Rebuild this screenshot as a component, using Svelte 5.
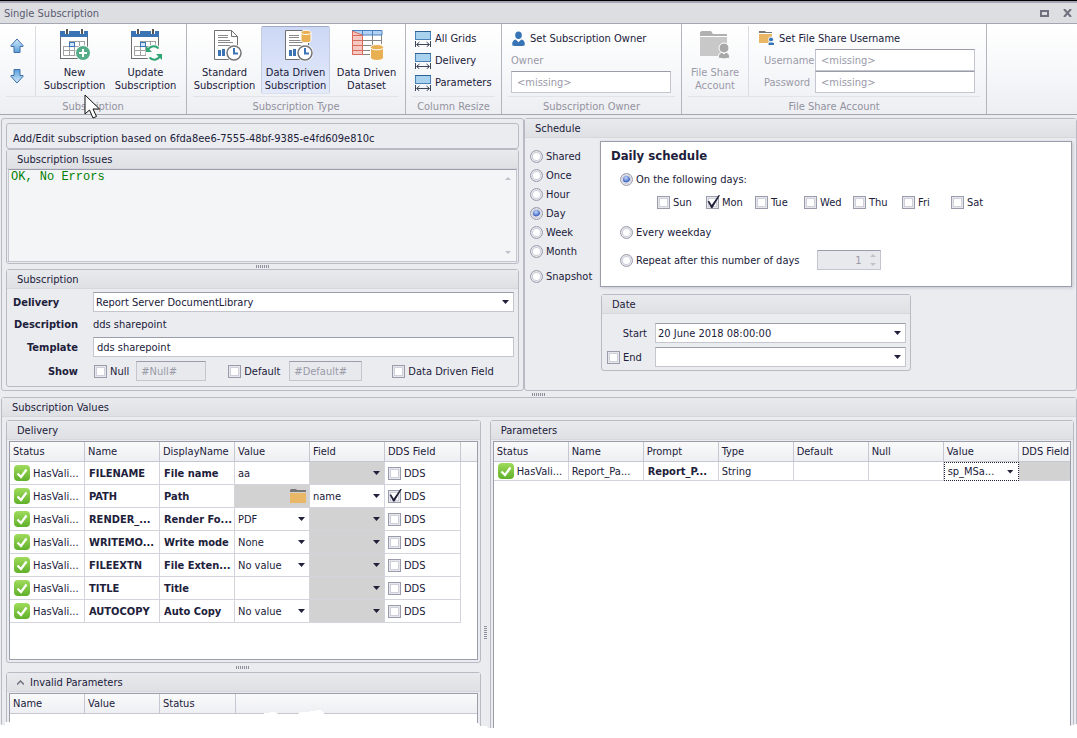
<script>
  const days = ["Sun", "Mon", "Tue", "Wed", "Thu", "Fri", "Sat"];
  const frequencies = ["Shared", "Once", "Hour", "Day", "Week", "Month", "Snapshot"];
  const resizers = ["All Grids", "Delivery", "Parameters"];

  let frequency = $state("Day");
  let selectedDays = $state(["Mon"]);
  let dailyMode = $state("days");

  let delivery = $state([
    { name: "FILENAME", display: "File name", value: "aa", kind: "text", field: "", dds: false },
    { name: "PATH", display: "Path", value: "", kind: "folder", field: "name", dds: true },
    { name: "RENDER_...", display: "Render Fo...", value: "PDF", kind: "list", field: "", dds: false },
    { name: "WRITEMO...", display: "Write mode", value: "None", kind: "list", field: "", dds: false },
    { name: "FILEEXTN", display: "File Exten...", value: "No value", kind: "list", field: "", dds: false },
    { name: "TITLE", display: "Title", value: "", kind: "text", field: "", dds: false },
    { name: "AUTOCOPY", display: "Auto Copy", value: "No value", kind: "list", field: "", dds: false },
  ]);
</script>

{#snippet arrow(flip)}
  <svg width="14" height="16" viewBox="0 0 14 16" class:flip>
    <defs>
      <linearGradient id="arrowFill" x1="0" y1="0" x2="0" y2="1">
        <stop offset="0" stop-color="#d3ecfb" />
        <stop offset="1" stop-color="#5b9fdc" />
      </linearGradient>
    </defs>
    <path d="M7 1 L13 7.5 V8.5 H10 V14.5 H4 V8.5 H1 V7.5 Z" fill="url(#arrowFill)" stroke="#3f6ea8" />
  </svg>
{/snippet}

{#snippet calendar(kind)}
  <svg width="34" height="34" viewBox="0 0 34 34">
    <rect x="2.500" y="4.500" width="27" height="26" fill="#fff" stroke="#6e6e6e" />
    <rect x="2" y="3" width="28" height="6" fill="#3a74b4" />
    <path d="M9 1v5M24 1v5" stroke="#fff" stroke-width="4" />
    <path d="M9 1v5M24 1v5" stroke="#555" stroke-width="2" />
    <rect x="11" y="14" width="6" height="5" fill="#cfe5fa" />
    <path d="M11.500 13.500h15M5.500 18.500h21M5.500 22.500h21M5.500 27.500h15M5.500 18v9.500M11.500 13v14.500M16.500 13v14.500M21.500 13v14.500M26.500 13v10" fill="none" stroke="#a2a2a2" />
    <rect x="11.500" y="14.500" width="5" height="4" fill="none" stroke="#3a74b4" />
    {#if kind === "new"}
      <circle cx="25" cy="25" r="7.500" fill="#55ac88" stroke="#fff" />
      <path d="M25 21v8M21 25h8" stroke="#fff" stroke-width="2" />
    {:else}
      <circle cx="25" cy="25" r="8.500" fill="#fbfbfc" />
      <path d="M18.500 23a6.500 6.500 0 0 1 11-2.500M31.500 27a6.500 6.500 0 0 1-11 2.500" fill="none" stroke="#2fa574" stroke-width="2" />
      <path d="M17 18v6h6ZM33 32v-6h-6Z" fill="#2fa574" />
    {/if}
  </svg>
{/snippet}

{#snippet report(driven)}
  <svg width="34" height="34" viewBox="0 0 34 34">
    <path d="M6.500 2.500H23.500L29.500 8.500V31.500H6.500Z" fill="#fff" stroke="#707070" />
    <path d="M23.500 2.500V8.500H29.500" fill="none" stroke="#707070" />
    <path d="M10 7.500h10M10 9.500h10M10 12.500h12M10 14.500h15M10 17.500h15" stroke="#8a8a8a" />
    <path d="M11.500 22v6M15.500 21v7" stroke="#3a74b4" stroke-width="3" />
    {#if driven}
      <path d="M22 4.500c0-3 10-3 10 0v8c0 3-10 3-10 0Z" fill="#e9b053" stroke="#fff" />
      <path d="M22 5c1 2 9 2 10 0" fill="none" stroke="#fff" />
    {/if}
    <circle cx="26" cy="25" r="8.500" fill="#fff" />
    <circle cx="26" cy="25" r="7" fill="#fff" stroke="#747474" stroke-width="1.500" />
    <path d="M26 20v5.500h4" fill="none" stroke="#3a74b4" stroke-width="2" />
  </svg>
{/snippet}

{#snippet dataset()}
  <svg width="34" height="34" viewBox="0 0 34 34">
    <rect x="2" y="2" width="30" height="25" fill="#fff" />
    <rect x="2" y="2" width="30" height="5" fill="#b3d1f2" />
    <path d="M2 3l10 4v20H2Z" fill="#f5c9c2" />
    <path d="M12 12.500h20M12 17.500h20M12 22.500h15M22.500 7v20M31.500 7v9M12 26.500h10" fill="none" stroke="#858585" />
    <path d="M2.500 2v25M12.500 7v20M2 7.500h10M2 12.500h10M2 17.500h10M2 22.500h10M2 26.500h10M2 3l10 4" fill="none" stroke="#d96b5c" />
    <path d="M2 2.500h30v4.500H12.500M12.500 2v5M22.500 2v5" fill="none" stroke="#4a80bd" />
    <path d="M20.500 19.500c0-4 13-4 13 0v10c0 4-13 4-13 0Z" fill="#e9b053" stroke="#fff" />
    <path d="M21 20c1 2.500 11 2.500 12 0" fill="none" stroke="#fff" />
  </svg>
{/snippet}

{#snippet person(size)}
  <svg width={size} height={size} viewBox="0 0 16 16">
    <ellipse cx="8" cy="4.500" rx="3.500" ry="4" fill="#3674b5" />
    <path d="M1.500 15.500Q.5 10 5 9L8 12L11 9Q15.500 10 14.500 15.500Q8 17 1.500 15.500Z" fill="#3674b5" />
  </svg>
{/snippet}

{#snippet folder()}
  <svg width="16" height="14" viewBox="0 0 16 14">
    <path d="M0 3V1L1 0H6L7 1H16V3Z" fill="#777" />
    <rect y="4" width="16" height="10" fill="#e9b766" />
  </svg>
{/snippet}

{#snippet tick()}
  <svg class="status" width="16" height="16" viewBox="0 0 16 16">
    <defs>
      <linearGradient id="okFill" x1="0" y1="0" x2="0" y2="1">
        <stop offset="0" stop-color="#a0dc5c" />
        <stop offset="1" stop-color="#60b02a" />
      </linearGradient>
    </defs>
    <rect width="16" height="16" rx="4" fill="url(#okFill)" />
    <path d="M3.500 8.500L7 12L12.500 4.500" fill="none" stroke="#fff" stroke-width="2.200" />
  </svg>
{/snippet}

{#snippet combo(id, label, value)}
  <span class="combo">
    <select {id} aria-label={label}><option>{value}</option></select>
  </span>
{/snippet}

<div class="window">
  <header class="titlebar">
    <span>Single Subscription</span>
    <div class="window-buttons">
      <button aria-label="Maximize">
        <svg width="9" height="7"><rect x="1" y="1" width="7" height="5" fill="none" stroke="#70707f" stroke-width="2" /></svg>
      </button>
      <button aria-label="Close">
        <svg width="9" height="8"><path d="M1 0L8 8M8 0L1 8" stroke="#70707f" stroke-width="2" /></svg>
      </button>
    </div>
  </header>

  <nav class="ribbon">
    <section class="group subscription-group">
      <div class="tools">
        <div class="arrows">
          <button aria-label="Previous">{@render arrow(false)}</button>
          <button aria-label="Next">{@render arrow(true)}</button>
        </div>
        <button class="big">{@render calendar("new")}<span>New<br />Subscription</span></button>
        <button class="big">{@render calendar("update")}<span>Update<br />Subscription</span></button>
      </div>
      <h2>Subscription</h2>
      <svg class="pointer" width="17" height="26" viewBox="0 0 17 26">
        <path d="M1 1V20L5.500 16L9 24L12.500 22.500L9 15H15.500Z" fill="#fff" stroke="#111" />
      </svg>
    </section>

    <section class="group type-group">
      <div class="tools">
        <button class="big">{@render report(false)}<span>Standard<br />Subscription</span></button>
        <button class="big active">{@render report(true)}<span>Data Driven<br />Subscription</span></button>
        <button class="big">{@render dataset()}<span>Data Driven<br />Dataset</span></button>
      </div>
      <h2>Subscription Type</h2>
    </section>

    <section class="group resize-group">
      <div class="tools rows">
        {#each resizers as name}
          <button class="small">
            <svg width="16" height="17" viewBox="0 0 16 17">
              <rect x=".5" y="1.500" width="15" height="8" fill="#a9d2ef" stroke="#4a82b6" />
              <path d="M0 1.500h16" stroke="#2f6192" />
              <path d="M.5 11v6M15.500 11v6M2 14.500h12M4.500 12l-3 2.500l3 2.500M11.500 12l3 2.500l-3 2.500" fill="none" stroke="#3b4658" />
            </svg>
            {name}
          </button>
        {/each}
      </div>
      <h2>Column Resize</h2>
    </section>

    <section class="group owner-group">
      <div class="tools rows">
        <button class="small">{@render person(15)}Set Subscription Owner</button>
        <label class="muted" for="owner">Owner</label>
        <input id="owner" class="ribbon-input" value="<missing>" />
      </div>
      <h2>Subscription Owner</h2>
    </section>

    <section class="group share-group">
      <div class="tools">
        <button class="big muted" disabled>
          <svg width="34" height="34" viewBox="0 0 34 34">
            <path d="M2 8V4L4 3H13L15 6H29V8Z" fill="#b0b0b0" />
            <path d="M2 9H29V28H2Z" fill="#c8c8c8" />
            <circle cx="26" cy="20" r="5" fill="#a8a8a8" stroke="#fff" />
            <path d="M20 30Q20 25 24 24L26 26L28 24Q32 25 32 30Q26 32 20 30Z" fill="#a8a8a8" stroke="#fff" />
          </svg>
          <span>File Share<br />Account</span>
        </button>
        <div class="rows share-fields">
          <button class="small">
            <svg width="16" height="16" viewBox="0 0 16 16">
              <path d="M0 3V1H6L7 2H13V3Z" fill="#777" />
              <rect y="4" width="13" height="9" fill="#e9b766" />
              <circle cx="12" cy="9.500" r="2.500" fill="#3674b5" stroke="#fff" />
              <path d="M9 15.500V13l1.500-1h3.500l1.500 1v2.500Z" fill="#3674b5" stroke="#fff" />
            </svg>
            Set File Share Username
          </button>
          <div class="pair"><label for="user">Username</label><input id="user" class="ribbon-input" value="<missing>" /></div>
          <div class="pair"><label for="pass">Password</label><input id="pass" class="ribbon-input" value="<missing>" /></div>
        </div>
      </div>
      <h2>File Share Account</h2>
    </section>
  </nav>

  <main>
    <div class="upper">
      <section class="panel editor">
        <div class="panel based-on">Add/Edit subscription based on 6fda8ee6-7555-48bf-9385-e4fd609e810c</div>
        <section class="panel issues">
          <h3><label for="issues">Subscription Issues</label></h3>
          <div class="issues-box">
            <textarea id="issues" readonly>OK, No Errors</textarea>
            <div class="scroll"><i class="up"></i><i class="down"></i></div>
          </div>
        </section>
        <div class="split"><i></i></div>
        <section class="panel">
          <h3>Subscription</h3>
          <div class="form">
            <label class="start" for="delivery">Delivery</label>
            {@render combo("delivery", "Delivery", "Report Server DocumentLibrary")}
            <b>Description</b>
            <span>dds sharepoint</span>
            <label for="template">Template</label>
            <input id="template" class="box" value="dds sharepoint" />
            <b>Show</b>
            <div class="show">
              <label><input type="checkbox" />Null</label>
              <input class="box off" aria-label="Null text" value="#Null#" disabled />
              <label class="second"><input type="checkbox" />Default</label>
              <input class="box off" aria-label="Default text" value="#Default#" disabled />
              <label class="third"><input type="checkbox" />Data Driven Field</label>
            </div>
          </div>
        </section>
      </section>

      <section class="panel schedule">
        <h3>Schedule</h3>
        <div class="schedule-body">
          <div class="frequencies">
            {#each frequencies as item}
              <label><input type="radio" name="frequency" value={item} bind:group={frequency} />{item}</label>
            {/each}
          </div>
          <div class="details">
            <div class="daily">
              <h4>Daily schedule</h4>
              <label><input type="radio" name="daily" value="days" bind:group={dailyMode} />On the following days:</label>
              <div class="days">
                {#each days as day}
                  <label><input type="checkbox" value={day} bind:group={selectedDays} />{day}</label>
                {/each}
              </div>
              <label><input type="radio" name="daily" value="weekday" bind:group={dailyMode} />Every weekday</label>
              <div class="repeat">
                <label><input type="radio" name="daily" value="repeat" bind:group={dailyMode} />Repeat after this number of days</label>
                <span class="spinner">
                  <input class="box" aria-label="Number of days" value="1" disabled />
                  <span><i class="up"></i><i class="down"></i></span>
                </span>
              </div>
            </div>
            <section class="panel date">
              <h3>Date</h3>
              <div class="date-form">
                <label class="right" for="start">Start</label>
                {@render combo("start", "Start", "20 June 2018 08:00:00")}
                <label><input type="checkbox" />End</label>
                {@render combo("end", "End date", "")}
              </div>
            </section>
          </div>
        </div>
      </section>
    </div>

    <div class="split"><i></i></div>

    <section class="panel values">
      <h3>Subscription Values</h3>
      <div class="value-panes">
        <div class="left-pane">
          <section class="panel">
            <h3>Delivery</h3>
            <div class="grid delivery-grid">
              <table>
                <colgroup><col span="5" class="c" /><col class="c-dds" /><col /></colgroup>
                <thead>
                  <tr><th>Status</th><th>Name</th><th>DisplayName</th><th>Value</th><th>Field</th><th>DDS Field</th><th></th></tr>
                </thead>
                <tbody>
                  {#each delivery as row}
                    <tr>
                      <td><div class="stat">{@render tick()}HasVali...</div></td>
                      <td class="strong">{row.name}</td>
                      <td class="strong">{row.display}</td>
                      <td class:gray={row.kind === "folder"}>
                        {#if row.kind === "list"}
                          {@render combo(undefined, row.name + " value", row.value)}
                        {:else if row.kind === "folder"}
                          <button class="browse" aria-label="Browse">{@render folder()}</button>
                        {:else}
                          {row.value}
                        {/if}
                      </td>
                      <td class:gray={!row.dds}>{@render combo(undefined, row.name + " field", row.field)}</td>
                      <td><label><input type="checkbox" bind:checked={row.dds} />DDS</label></td>
                      <td class="rest"></td>
                    </tr>
                  {/each}
                </tbody>
              </table>
            </div>
          </section>
          <div class="split tall"><i></i></div>
          <section class="panel invalid">
            <h3><svg width="7" height="5"><path d="M0 4.500L3.500 1L7 4.500" fill="none" stroke="#70707f" stroke-width="1.500" /></svg>Invalid Parameters</h3>
            <div class="grid">
              <table>
                <colgroup><col span="2" class="c" /><col class="c-dds" /><col /></colgroup>
                <thead><tr><th>Name</th><th>Value</th><th>Status</th><th></th></tr></thead>
              </table>
            </div>
          </section>
        </div>
        <div class="split vertical"><i></i></div>
        <section class="panel params">
          <h3>Parameters</h3>
          <div class="grid params-grid">
            <table>
              <colgroup><col span="7" class="c" /><col /></colgroup>
              <thead>
                <tr><th>Status</th><th>Name</th><th>Prompt</th><th>Type</th><th>Default</th><th>Null</th><th>Value</th><th>DDS Field</th></tr>
              </thead>
              <tbody>
                <tr>
                  <td><div class="stat">{@render tick()}HasVali...</div></td>
                  <td>Report_Pa...</td>
                  <td class="strong">Report_P...</td>
                  <td>String</td>
                  <td></td>
                  <td></td>
                  <td class="focused">{@render combo(undefined, "Parameter value", "sp_MSa...")}</td>
                  <td class="gray"></td>
                </tr>
              </tbody>
            </table>
          </div>
        </section>
      </div>
    </section>
  </main>

  <svg class="tear" width="100%" height="28" aria-hidden="true">
    <path fill="#fff" d="M0 14L2 15L5 16L5 12L9 12L12 13H264V3L268 3L271 2L275 2L278 4H298L300 2L308 2L311 1L316 1L319 -1L324 3V13H478L480 16H487L488 18H1040L1050 16L1060 18L1077 14H4000V28H0Z" />
  </svg>
</div>

<style>
  :global(body) {
    margin: 0;
    background: #fff;
  }
  .window, .window * {
    box-sizing: border-box;
  }
  .window {
    position: relative;
    display: flex;
    flex-direction: column;
    min-height: 100vh;
    overflow: hidden;
    border-top: 1px solid #000;
    background: #ebecf0;
    color: #20203a;
    font: 11px/13px "DejaVu Sans Condensed", "Noto Sans", sans-serif;
  }
  button, input, select, textarea {
    margin: 0;
    font: inherit;
    color: inherit;
  }
  button {
    padding: 0;
    border: 0;
    background: none;
  }
  svg {
    display: block;
    flex: none;
  }
  label {
    display: flex;
    align-items: center;
    white-space: nowrap;
  }
  .titlebar {
    display: flex;
    justify-content: space-between;
    align-items: center;
    height: 23px;
    padding: 0 5px 0 4px;
    border-top: 2px solid #a5a5b2;
    border-bottom: 1px solid #a5a6b2;
    background: #dddee2;
    color: #5b5b70;
  }
  .window-buttons {
    display: flex;
    gap: 14px;
  }

  /* ribbon */
  .ribbon {
    display: flex;
    height: 91px;
    border-bottom: 1px solid #a5a6b2;
    background: linear-gradient(#fff, #f7f8fa 50%, #edeef2);
  }
  .group {
    position: relative;
    display: flex;
    flex-direction: column;
    border-right: 1px solid #b4b5c0;
  }
  .subscription-group { width: 187px; }
  .type-group { width: 219px; }
  .resize-group { width: 96px; }
  .owner-group { width: 180px; }
  .share-group { width: 305px; }
  .tools {
    display: flex;
    height: 72px;
    padding: 2px 2px 0;
  }
  .ribbon h2 {
    margin: 0 6px;
    padding-top: 3px;
    border-top: 1px solid #e2e3e8;
    font: inherit;
    text-align: center;
    color: #92929e;
  }
  .arrows {
    display: flex;
    flex-direction: column;
    gap: 14px;
    width: 34px;
    padding: 12px 0 0 8px;
    border-right: 1px solid #dcdde2;
  }
  .arrows button {
    width: 14px;
  }
  .flip {
    transform: rotate(180deg);
  }
  .big {
    display: flex;
    flex-direction: column;
    align-items: center;
    gap: 4px;
    width: 69px;
    height: 68px;
    margin: 0 1px;
    padding-top: 1px;
    border: 1px solid transparent;
    white-space: nowrap;
  }
  .arrows + .big {
    margin-left: 4px;
  }
  .big.active {
    border-color: #a3abc4 #c6cde0 #d9dfee;
    border-radius: 2px;
    background: linear-gradient(#cbd7f5, #e4eafa);
  }
  .rows {
    display: flex;
    flex-direction: column;
    padding: 3px 9px 0;
  }
  .rows > * {
    display: flex;
    align-items: center;
    height: 22px;
  }
  .small {
    gap: 4px;
    white-space: nowrap;
  }
  .muted, .pair {
    color: #9a9aa8;
  }
  .ribbon-input {
    width: 160px;
    height: 22px;
    padding: 0 5px;
    border: 1px solid #c4c5cf;
    border-top-color: #9c9dab;
    background: #fff;
    color: #9a9aa8;
  }
  .share-group .big {
    width: 60px;
  }
  .share-fields {
    margin-left: 2px;
    padding: 1px 0 0 10px;
    border-left: 1px solid #dcdde2;
  }
  .pair {
    padding-left: 5px;
  }
  .pair label {
    width: 51px;
  }
  .pointer {
    position: absolute;
    left: 84px;
    top: 70px;
    z-index: 2;
  }

  /* panels */
  main {
    display: flex;
    flex-direction: column;
    flex: 1;
    padding: 3px 0 0 1px;
  }
  .panel {
    border: 1px solid #b9bac4;
    border-radius: 3px;
    background: #ebecf0;
  }
  h3 {
    display: flex;
    align-items: center;
    gap: 6px;
    height: 19px;
    margin: 0;
    padding-left: 10px;
    border-bottom: 1px solid #d6d7dc;
    background: linear-gradient(#e9eaee, #dfe0e4);
    font: inherit;
  }
  .upper {
    display: grid;
    grid-template-columns: minmax(0, 523fr) minmax(0, 553fr);
  }
  .editor {
    padding: 4px 4px 3px;
  }
  .based-on {
    height: 26px;
    padding: 8px 6px 0;
  }
  .issues {
    height: 115px;
    padding-bottom: 1px;
  }
  .issues-box {
    display: flex;
    height: 93px;
    margin: 0 1px;
    border: 1px solid #c4c5cf;
    border-top-color: #9c9dab;
    background: #f4f5f7;
  }
  textarea {
    flex: 1;
    padding: 1px 2px;
    border: 0;
    background: none;
    color: #008000;
    font: 12px/13px "Liberation Mono", monospace;
    resize: none;
    outline: none;
  }
  .scroll {
    display: flex;
    flex-direction: column;
    justify-content: space-between;
    padding: 7px 5px;
  }
  .up, .down {
    display: block;
    border: 3px solid transparent;
  }
  .up {
    border-top: 0;
    border-bottom: 3px solid #c0c1ca;
  }
  .down {
    border-bottom: 0;
    border-top: 3px solid #c0c1ca;
  }
  .split {
    display: flex;
    flex: none;
    align-items: center;
    justify-content: center;
    height: 6px;
  }
  .editor .split {
    height: 5px;
  }
  .split.tall {
    height: 9px;
  }
  .split i {
    width: 14px;
    height: 3px;
    background: repeating-linear-gradient(90deg, #8e8f9c 0 1px, transparent 1px 2px);
  }
  .split.vertical {
    width: 9px;
    height: auto;
    padding-top: 108px;
  }
  .split.vertical i {
    width: 3px;
    height: 14px;
    background: repeating-linear-gradient(#8e8f9c 0 1px, transparent 1px 2px);
  }

  /* fields */
  .box, .combo {
    height: 20px;
    border: 1px solid #c4c5cf;
    border-top-color: #9c9dab;
    background: #fff;
  }
  .box {
    min-width: 0;
    padding: 0 3px;
  }
  .combo {
    position: relative;
    display: block;
  }
  .combo::after {
    position: absolute;
    right: 4px;
    top: 7px;
    width: 7px;
    height: 4px;
    background: #20203a;
    clip-path: polygon(0 0, 100% 0, 50% 100%);
    content: "";
    pointer-events: none;
  }
  select {
    display: block;
    width: 100%;
    height: 100%;
    padding: 0 14px 0 2px;
    border: 0;
    background: none;
    appearance: none;
  }
  input[type="checkbox"], input[type="radio"] {
    flex: none;
    position: relative;
    width: 13px;
    height: 13px;
    margin-right: 3px;
    border: 1px solid #9a9bab;
    background: #fff;
    box-shadow: inset 0 0 0 1px #e6e7ec, inset 0 0 0 2px #cfd0da;
    appearance: none;
  }
  input[type="radio"] {
    border-radius: 50%;
  }
  input[type="radio"]:checked {
    background: radial-gradient(circle at 5px 4px, #c4d8ff, #3f66c0 4px, #fff 5px);
  }
  input[type="checkbox"]:checked::before {
    position: absolute;
    left: 0;
    top: -2px;
    width: 13px;
    height: 13px;
    background: #20203a;
    clip-path: polygon(4% 48%, 17% 46%, 36% 76%, 90% 0, 100% 2%, 42% 100%, 32% 100%);
    content: "";
  }
  .form {
    display: grid;
    grid-template-columns: 65px minmax(0, 1fr);
    grid-template-rows: 20px 25px 20px 28px;
    column-gap: 15px;
    align-items: center;
    padding: 3px 4px 1px 6px;
  }
  .form > label, .form > b {
    justify-self: end;
    font-weight: bold;
  }
  .form > label.start {
    justify-self: start;
  }
  .show {
    display: flex;
    align-items: center;
    padding-left: 1px;
  }
  .show .off {
    width: 70px;
    margin-left: 7px;
    padding: 0 4px;
    background: #e8e9ed;
    color: #9a9aa8;
  }
  .show .second {
    margin-left: 22px;
  }
  .show .second + .off {
    width: 73px;
    margin-left: 9px;
  }
  .show .third {
    margin-left: 30px;
  }

  .schedule-body {
    display: flex;
    padding: 3px 4px 0;
  }
  .frequencies {
    display: flex;
    flex-direction: column;
    gap: 6px;
    width: 71px;
    padding: 9px 0 0 1px;
  }
  .frequencies label:last-child {
    margin-top: 6px;
  }
  .details {
    flex: 1;
    min-width: 0;
  }
  .daily {
    display: flex;
    flex-direction: column;
    align-items: flex-start;
    height: 146px;
    padding: 5px 10px;
    border: 1px solid #9c9dab;
    background: #fff;
    box-shadow: 1px 1px 3px #c4c5cf;
  }
  h4 {
    margin: 0 0 9px;
    font: bold 13px/17px "DejaVu Sans Condensed", "Noto Sans", sans-serif;
  }
  .daily > label, .repeat {
    margin-left: 9px;
  }
  .days {
    display: flex;
    margin: 10px 0 17px 46px;
  }
  .days label {
    width: 49px;
  }
  .repeat {
    display: flex;
    align-items: center;
    gap: 18px;
    margin-top: 11px;
  }
  .spinner {
    position: relative;
    display: flex;
  }
  .spinner .box {
    width: 64px;
    padding-right: 19px;
    background: #e8e9ed;
    color: #9a9aa8;
    text-align: right;
  }
  .spinner > span {
    position: absolute;
    right: 5px;
    top: 4px;
    display: grid;
    gap: 6px;
  }
  .date {
    width: 66%;
    max-width: 310px;
    margin: 7px 0 0 1px;
  }
  .date-form {
    display: grid;
    grid-template-columns: 46px minmax(0, 1fr);
    gap: 4px 2px;
    padding: 9px 4px 3px 5px;
  }
  .date-form .right {
    justify-content: flex-end;
    padding-right: 6px;
  }

  /* value grids */
  .values {
    display: flex;
    flex-direction: column;
    flex: 1;
  }
  .value-panes {
    display: flex;
    flex: 1;
    padding: 3px 2px 0 4px;
  }
  .left-pane {
    display: flex;
    flex-direction: column;
    flex: 476 1 0;
    min-width: 0;
  }
  .params {
    display: flex;
    flex-direction: column;
    flex: 584 1 0;
    min-width: 0;
  }
  .invalid {
    display: flex;
    flex-direction: column;
    flex: 1;
  }
  .grid {
    flex: 1;
    margin: 1px 2px 2px;
    border: 1px solid #9c9dab;
    background: #fff;
    overflow: hidden;
  }
  .delivery-grid {
    height: 219px;
  }
  table {
    width: 100%;
    table-layout: fixed;
    border-spacing: 0;
  }
  .c { width: 75px; }
  .c-dds { width: 76px; }
  th, td {
    height: 23px;
    padding: 0 0 0 3px;
    border-right: 1px solid #d4d5dc;
    border-bottom: 1px solid #d4d5dc;
    overflow: hidden;
    text-align: left;
    white-space: nowrap;
  }
  th {
    height: 20px;
    background: linear-gradient(#fafafb, #eeeff2);
    border-color: #c6c7d0;
    font-weight: normal;
  }
  th:last-child, td:last-child {
    border-right: 0;
  }
  td.rest {
    border: 0;
  }
  .params-grid td {
    height: 19px;
  }
  .strong {
    padding-left: 4px;
    font-weight: bold;
  }
  .gray {
    background: #d2d2d2;
  }
  .stat {
    display: flex;
    align-items: center;
    gap: 3px;
    padding-left: 1px;
  }
  td .combo {
    height: 18px;
    margin-left: -3px;
    border: 0;
    background: none;
  }
  td select {
    padding-left: 3px;
  }
  td.focused {
    border: 1px dotted #20203a;
  }
  td.focused .combo {
    height: 16px;
  }
  td.focused .combo::after {
    top: 6px;
  }
  .browse {
    display: block;
    margin: 0 3px 0 auto;
  }
  .tear {
    position: absolute;
    left: 0;
    bottom: 0;
  }
</style>
